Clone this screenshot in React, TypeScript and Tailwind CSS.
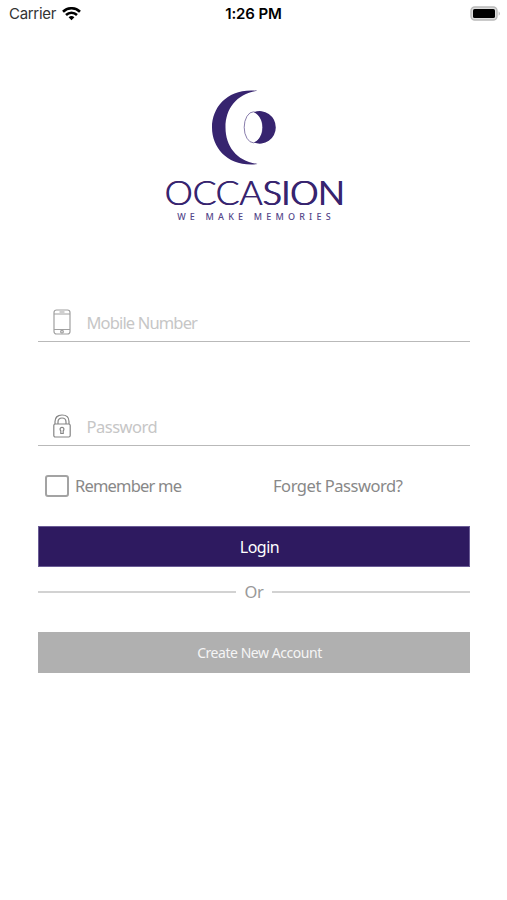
import type { ReactNode } from "react";

function StatusBar() {
  return (
    <header className="grid h-7 grid-cols-3 items-center pl-[9px] pr-[6px] font-['Inter',sans-serif] text-[15px] leading-7 text-black">
      <div className="flex items-center gap-[6px]">
        <span className="tracking-[-0.3px] text-[#333]">Carrier</span>
        <svg width="19" height="14" viewBox="0 0 19 14" fill="none" stroke="#000" strokeWidth="2.6">
          <path d="M1 4.8C5.8.1 13.2.1 18 4.8" />
          <path d="M4 8C7.2 5 11.8 5 15 8" />
          <path d="M6.6 10.2C8.3 8.7 10.7 8.7 12.4 10.2L9.5 13.3Z" fill="#000" stroke="none" />
        </svg>
      </div>
      <span className="pr-[3px] text-center font-semibold tracking-[-0.1px]">1:26 PM</span>
      <svg className="-mt-px justify-self-end" width="31" height="15" viewBox="0 0 31 15">
        <rect x="1" y="1" width="26" height="13" rx="3.8" fill="#ddd" stroke="#b9b9b9" strokeWidth="1.4" />
        <rect x="3" y="3" width="22" height="9" rx="1.6" fill="#000" />
        <path d="M28.7 5.2Q31 7.5 28.7 9.8Z" fill="#b5b5b5" />
      </svg>
    </header>
  );
}

function Logo() {
  return (
    <div className="flex flex-col items-center">
      <svg width="70" height="76" viewBox="209 89 70 76" className="-ml-[21px]">
        <path d="M257.500 90.800C229 87.500 212 106 212 127.400S229 167.300 257.500 164C237 161 225.500 146.500 225.500 127.400S237 93.800 257.500 90.800Z" fill="#37246f" />
        <ellipse cx="253.500" cy="127.300" rx="9.300" ry="15.500" fill="#fff" stroke="#6a5c95" strokeWidth="0.8" />
        <path d="M254 112.200A16 16.300 0 1 1 254 142.600C265.500 137 265.500 118 254 112.200Z" fill="#37246f" />
      </svg>
      <div className="mt-[11px] h-[32px] scale-x-[1.08] whitespace-nowrap font-[Lato,sans-serif] text-[33px] leading-8 font-light tracking-[-0.4px] text-[#37246f] [text-shadow:0.7px_0_#37246f]">
        <span>OCCA</span>
        <span className="[text-shadow:0.7px_0_#37246f,1.4px_0_#37246f]">SION</span>
      </div>
      <div className="h-[17px] whitespace-nowrap pl-[4px] font-['Noto_Sans',sans-serif] text-[9px] leading-[17px] font-medium tracking-[4.2px] text-[#54478a]">
        WE MAKE MEMORIES
      </div>
    </div>
  );
}

function PhoneIcon() {
  return (
    <svg width="18" height="26" viewBox="0 0 18 26" fill="none" stroke="#a0a0a0" strokeWidth="1.2">
      <rect x="1" y="1" width="16" height="24" rx="2.5" />
      <path d="M1 5H17M1 20.500H17M6.500 3H11.500" />
      <rect x="7.700" y="21.600" width="2.600" height="2.200" rx="0.800" />
    </svg>
  );
}

function LockIcon() {
  return (
    <svg width="18" height="24" viewBox="0 0 18 24" fill="none" stroke="#858585" strokeWidth="1.2">
      <rect x="0.800" y="10" width="16.400" height="13" rx="1.500" />
      <path d="M2 10V7.500C2 3.300 5 1 9 1S16 3.300 16 7.500V10M5 10V8C5 5.500 6.500 4 9 4S13 5.500 13 8V10" />
      <path d="M7.800 19.500V16.700A1.900 1.900 0 1 1 10.200 16.700V19.500Z" />
    </svg>
  );
}

function Field({ icon, children }: { icon: ReactNode; children: ReactNode }) {
  return (
    <label className="flex h-10 items-center border-b-[1.5px] border-[#b9b9b9] pl-[15px]">
      <span className="flex w-[33.5px]">{icon}</span>
      <span className="pt-1 text-[16.5px] text-[#c6c6c6]">{children}</span>
    </label>
  );
}

export default function App() {
  return (
    <div className="h-[900px] w-[507px] overflow-hidden bg-white font-['Noto_Sans',sans-serif]">
      <StatusBar />
      <main className="pr-[37px] pl-[38px] pt-[61px]">
        <Logo />
        <div className="mt-[77px]">
          <Field icon={<PhoneIcon />}>
            <span className="tracking-[-0.85px]">Mobile Number</span>
          </Field>
        </div>
        <div className="mt-16">
          <Field icon={<LockIcon />}>
            <span className="tracking-[-0.5px]">Password</span>
          </Field>
        </div>
        <div className="mt-7 flex h-6 items-center pl-[7px] text-[16.5px] text-[#888]">
          <span className="h-[22px] w-6 rounded-[3px] border-2 border-[#a3a3a3]" />
          <span className="ml-[6px] w-[198px] pt-px tracking-[-0.8px]">Remember me</span>
          <span className="pt-px tracking-[-0.45px]">Forget Password?</span>
        </div>
        <button className="mt-7 block h-[41px] w-full border border-[#6a5c95] bg-[#2e1a60] pl-[11px] text-[16px] tracking-[-0.5px] text-white">
          Login
        </button>
        <div className="flex h-[50px] items-center gap-[9px] text-[16.5px] text-[#999]">
          <span className="h-[2px] flex-1 bg-[#d2d2d2]" />
          <span className="tracking-[-0.4px]">Or</span>
          <span className="h-[2px] flex-1 bg-[#d2d2d2]" />
        </div>
        <button className="mt-[15px] block h-[41px] w-full bg-[#b0b0b0] pl-[11px] text-[14px] tracking-[-0.45px] text-[#f5f5f5]">
          Create New Account
        </button>
      </main>
    </div>
  );
}
